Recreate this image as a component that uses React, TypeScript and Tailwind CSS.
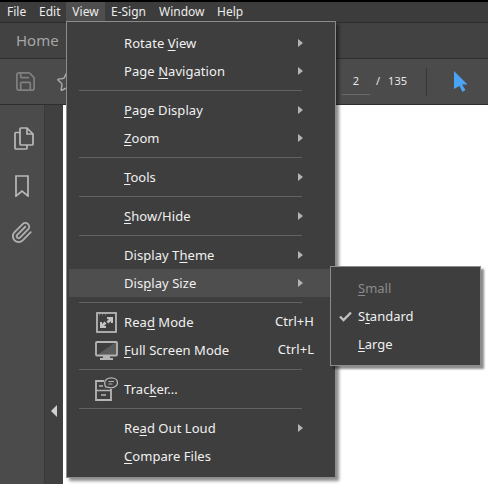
import { Paperclip, Save, Star } from "lucide-react";
import type { ReactNode } from "react";

const font = "font-['Noto_Sans','Open_Sans',sans-serif]";

function Arrow() {
  return <span className="absolute left-[229px] top-[10px] h-0 w-0 border-y-[4px] border-l-[5px] border-y-transparent border-l-[#b4b4b4]" />;
}

function ReadIcon() {
  return (
    <svg width="21" height="21" viewBox="0 0 21 21" fill="none">
      <rect x="1" y="1" width="19" height="19" stroke="#b5b5b5" strokeWidth="1.8" />
      <path d="M3 3h1M6 3h1M9 3h1" stroke="#8a8a8a" />
      <path d="M11 5h6v6h-2v-2l-2.5 2.5-2-2L13 7h-2Z" fill="#c4c4c4" />
      <path d="M10 16H4v-6h2v2l2.5-2.5 2 2L8 14h2Z" fill="#c4c4c4" />
    </svg>
  );
}

function MonitorIcon() {
  return (
    <svg width="23" height="19" viewBox="0 0 23 19" fill="none">
      <path d="M3 13.5 19.5 2H21.5V13.5Z" fill="#5c5c5c" />
      <rect x="1" y="1" width="21" height="13.5" rx="1" stroke="#b5b5b5" strokeWidth="1.8" />
      <path d="M8 15h7v2h3v2H5v-2h3Z" fill="#b5b5b5" />
    </svg>
  );
}

function TrackerIcon() {
  return (
    <svg width="23" height="24" viewBox="0 0 23 24" fill="none">
      <path d="M9 4H1v19h15V12" stroke="#b5b5b5" strokeWidth="1.8" />
      <path d="M1 13.5h15" stroke="#b5b5b5" strokeWidth="1.5" />
      <path d="M4 9h4M6 18h5" stroke="#b5b5b5" strokeWidth="1.4" />
      <path d="M10.6 10c-.3-1-.9-2-.9-4.200C9.700 3 12.500.8 16.200.8S22.500 3 22.500 5.800s-2.800 5-6.300 5c-1 0-1.800-.2-2.500-.4Z" stroke="#b5b5b5" strokeWidth="1.3" fill="#3e3e3e" />
      <path d="M13.500 4.500h5.500M13.500 7h4" stroke="#b5b5b5" strokeWidth="1.2" />
    </svg>
  );
}

function PagesIcon() {
  return (
    <svg className="ml-[3px]" width="20" height="24" viewBox="0 0 20 24" fill="none" stroke="#b9b9b9" strokeWidth="1.7">
      <path d="M6 5.500H2a1 1 0 0 0-1 1V21a1 1 0 0 0 1 1h10a1 1 0 0 0 1-1v-3" />
      <path d="M6 2a1 1 0 0 1 1-1h6l6 6v10a1 1 0 0 1-1 1H7a1 1 0 0 1-1-1Z" />
      <path d="M13 1v6h6" />
    </svg>
  );
}

function Row({ icon, children, shortcut, arrow, active }: { icon?: ReactNode; children: ReactNode; shortcut?: string; arrow?: boolean; active?: boolean }) {
  return (
    <div className={`relative ml-[2px] flex h-[28px] items-center ${active ? "bg-[#4e4e4e]" : ""}`}>
      <div className="flex w-[55px] shrink-0 justify-end pr-[6px]">
        <div className="flex w-[24px] justify-center">{icon}</div>
      </div>
      <span className="pt-[2px] tracking-[0.05px]">{children}</span>
      {shortcut && <span className="absolute right-[21px] top-[4px] tracking-[0.05px]">{shortcut}</span>}
      {arrow && <Arrow />}
    </div>
  );
}

function Sep() {
  return (
    <div className="flex h-[11px] items-center pl-[12px] pr-[33px]">
      <div className="h-px w-full bg-[#626262]" />
    </div>
  );
}

function DisplaySizeMenu() {
  return (
    <div className="absolute left-[330px] top-[266px] z-20 h-[100px] w-[151px] border border-[#8c8c8c] bg-[#3e3e3e] py-[7px] text-[13px] text-[#f0f0f0] shadow-[3px_3px_2px_rgba(0,0,0,0.45)]">
      <div className="flex h-[28px] items-center pl-[27px] pt-[2px] text-[#8b8b8b]"><u className="underline-offset-2">S</u>mall</div>
      <div className="relative flex h-[28px] items-center pl-[27px] pt-[2px]">
        <svg className="absolute left-[8px] top-[9px]" width="13" height="11" viewBox="0 0 13 11"><path d="M1 5.500l3.500 3.500L12 1.500" fill="none" stroke="#c0c0c0" strokeWidth="2.400" /></svg>
        S<u className="underline-offset-2">t</u>andard
      </div>
      <div className="flex h-[28px] items-center pl-[27px] pt-[2px]"><u className="underline-offset-2">L</u>arge</div>
    </div>
  );
}

function ViewMenu() {
  return (
    <div className="absolute left-[66px] top-[21px] z-10 h-[457px] w-[270px] border border-[#8c8c8c] bg-[#3e3e3e] py-[7px] text-[13px] text-[#f0f0f0] shadow-[3px_3px_3px_rgba(0,0,0,0.45)]">
      <Row arrow>Rotate <u className="underline-offset-2">V</u>iew</Row>
      <Row arrow>Page <u className="underline-offset-2">N</u>avigation</Row>
      <Sep />
      <Row arrow><u className="underline-offset-2">P</u>age Display</Row>
      <Row arrow><u className="underline-offset-2">Z</u>oom</Row>
      <Sep />
      <Row arrow><u className="underline-offset-2">T</u>ools</Row>
      <Sep />
      <Row arrow><u className="underline-offset-2">S</u>how/Hide</Row>
      <Sep />
      <Row arrow>Display T<u className="underline-offset-2">h</u>eme</Row>
      <Row arrow active>Dis<u className="underline-offset-2">p</u>lay Size</Row>
      <Sep />
      <Row icon={<ReadIcon />} shortcut="Ctrl+H">Rea<u className="underline-offset-2">d</u> Mode</Row>
      <Row icon={<MonitorIcon />} shortcut="Ctrl+L"><u className="underline-offset-2">F</u>ull Screen Mode</Row>
      <Sep />
      <Row icon={<TrackerIcon />}>Trac<u className="underline-offset-2">k</u>er...</Row>
      <Sep />
      <Row arrow>Re<u className="underline-offset-2">a</u>d Out Loud</Row>
      <Row><u className="underline-offset-2">C</u>ompare Files</Row>
    </div>
  );
}

export default function App() {
  return (
    <div className={`relative flex h-[484px] w-[488px] flex-col overflow-hidden bg-white text-[#ececec] ${font}`}>
      <div className="h-[2px] shrink-0 bg-black" />
      <div className="flex h-[21px] shrink-0 items-center border-b border-[#2c2c2c] bg-[#3c3c3c] pl-[2px] text-[12px]">
        <span className="ml-[5px] w-[32px]">File</span>
        <span className="w-[27px]">Edit</span>
        <span className="flex h-full w-[39px] items-center justify-center bg-[#4e4e4e]">View</span>
        <span className="ml-[6px] w-[48px]">E-Sign</span>
        <span className="w-[58px]">Window</span>
        <span>Help</span>
      </div>
      <div className="flex h-[36px] shrink-0 items-center border-b border-[#2e2e2e] bg-[#424242] pl-[16px] text-[15px] text-[#a6a6a6]">Home</div>
      <div className="flex h-[46px] shrink-0 items-center border-b border-[#2e2e2e] bg-[#4b4b4b] text-[#e8e8e8]">
        <Save className="ml-[14px] text-[#808080]" size={23} strokeWidth={1.8} />
        <Star className="ml-[19px] text-[#a8a8a8]" size={22} strokeWidth={1.6} />
        <div className="ml-[264px] flex h-[26px] w-[28px] items-center justify-center border-b border-[#6b6b6b] text-[11px]">2</div>
        <span className="ml-[6px] text-[11px]">/</span>
        <span className="ml-[8px] text-[11px]">135</span>
        <div className="ml-[19px] h-[28px] w-px bg-[#363636]" />
        <svg className="ml-[27px]" width="14" height="21" viewBox="0 0 14 21"><path d="M0 0l13.500 13.500H8l3.500 5.500-3 2-3-6L0 18Z" fill="#4ba3f5" /></svg>
      </div>
      <div className="flex min-h-0 flex-1">
        <div className="flex w-[45px] shrink-0 flex-col items-center gap-[24px] border-r border-[#3a3a3a] bg-[#4b4b4b] pt-[22px]">
          <PagesIcon />
          <svg width="14" height="22" viewBox="0 0 14 22" fill="none"><path d="M1 1h12v20l-6-5-6 5Z" stroke="#b9b9b9" strokeWidth="1.7" /></svg>
          <Paperclip className="-ml-[1px] text-[#b0b0b0]" size={23} strokeWidth={1.9} />
        </div>
        <div className="flex w-[18px] shrink-0 justify-center bg-[#404040] pt-[300px]">
          <span className="h-0 w-0 border-y-[6px] border-r-[6px] border-y-transparent border-r-[#d0d0d0]" />
        </div>
      </div>
      <ViewMenu />
      <DisplaySizeMenu />
    </div>
  );
}
